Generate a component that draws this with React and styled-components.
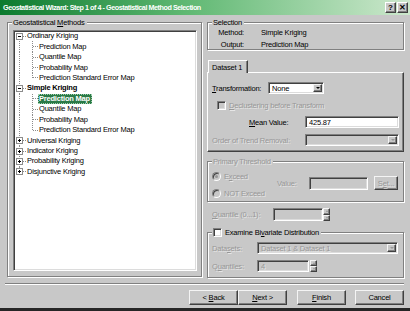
import React from 'react';
import styled, { createGlobalStyle, css } from 'styled-components';

const C = {
  face: '#c8c8c8',
  shadow: '#808080',
  dark: '#404040',
  light: '#ffffff',
  dis: '#979797',
};

const Global = createGlobalStyle`
  html, body { margin: 0; padding: 0; background: ${C.face}; }
  body {
    font-family: 'Liberation Sans', Arial, sans-serif;
    font-size: 7.5px;
    letter-spacing: -0.2px;
    color: #000;
  }
  * { box-sizing: border-box; }
`;

const Window = styled.div`
  width: 410px;
  height: 311px;
  background: ${C.face};
  display: flex;
  flex-direction: column;
  border-bottom: 3px solid #262626;
  overflow: hidden;
`;

const TitleBar = styled.div`
  height: 15px;
  flex: none;
  display: flex;
  align-items: center;
  padding: 0 2px 0 3px;
  background: linear-gradient(90deg, #0c7a2e 0%, #5fb872 45%, #cde8cd 100%);
`;

const TitleText = styled.div`
  flex: 1;
  color: #fff;
  font-weight: bold;
  font-size: 7.2px;
  letter-spacing: -0.45px;
  white-space: nowrap;
`;

const CapBtn = styled.div`
  width: 11px;
  height: 11px;
  margin-left: ${p => p.$gap || 0}px;
  background: ${C.face};
  border: 1px solid;
  border-color: #fff ${C.dark} ${C.dark} #fff;
  box-shadow: inset -1px -1px 0 ${C.shadow};
  display: flex;
  align-items: center;
  justify-content: center;
  font-weight: bold;
  font-size: 8px;
  letter-spacing: 0;
  line-height: 1;
  color: #000;
`;

const Body = styled.div`
  display: flex;
  gap: 5px;
  padding: 7px 6px 0 7px;
  height: 263px;
  flex: none;
`;

const Group = styled.div`
  position: relative;
  flex: none;
  width: ${p => p.$w || 197}px;
  height: ${p => p.$h}px;
  margin-top: ${p => p.$mt || 0}px;
  border: 1px solid ${C.shadow};
  box-shadow: 1px 1px 0 #fff, inset 1px 1px 0 #fff;
`;

const disabledText = css`
  color: ${C.dis};
  text-shadow: 1px 1px 0 rgba(255, 255, 255, 0.55);
`;

const GroupLabel = styled.div`
  position: absolute;
  top: -5px;
  left: 4px;
  padding: 0 2px 0 1px;
  background: ${C.face};
  line-height: 9px;
  display: flex;
  align-items: center;
  gap: 3px;
  white-space: nowrap;
  ${p => p.$disabled && disabledText}
`;

const U = styled.span`
  text-decoration: underline;
  text-underline-offset: 1px;
`;

/* ---------- Tree ---------- */

const LeftGroup = styled(Group)`
  display: flex;
  padding: 7px 4px 5px 5px;
`;

const Tree = styled.div`
  flex: 1;
  background: #fff;
  border: 1px solid;
  border-color: ${C.shadow} #fff #fff ${C.shadow};
  box-shadow: inset 1px 1px 0 ${C.dark}, inset -1px -1px 0 #dcdcdc;
  overflow: hidden;
`;

const dots = 'repeating-linear-gradient(to bottom, #8c8c8c 0 1px, transparent 1px 2px)';
const hdots = 'repeating-linear-gradient(to right, #8c8c8c 0 1px, transparent 1px 2px)';

const TreeRow = styled.div`
  height: 10.45px;
  display: flex;
  align-items: stretch;
  white-space: nowrap;
`;

const RootGutter = styled.span`
  flex: none;
  width: 12px;
  display: flex;
  align-items: center;
  background-repeat: no-repeat;
  background-image: ${p => (p.$line === 'none' ? 'none' : dots)}${p => (p.$tick ? `, ${hdots}` : '')};
  background-position: ${p => (p.$line === 'bottom' ? '5px 50%' : '5px 0')}${p => (p.$tick ? ', 9px 50%' : '')};
  background-size: ${p => (p.$line === 'full' ? '1px 100%' : '1px 50%')}${p => (p.$tick ? ', 3px 1px' : '')};
`;

const ChildGutter = styled.span`
  flex: none;
  width: 12px;
  background-repeat: no-repeat;
  background-image: ${dots}, ${hdots};
  background-position: 6px 0, 7px 50%;
  background-size: 1px ${p => (p.$last ? '55%' : '100%')}, 5px 1px;
`;

const ExpandBox = styled.span`
  width: 7px;
  height: 7px;
  margin-left: 2px;
  border: 1px solid #8c8c8c;
  background: #fff;
  display: flex;
  align-items: center;
  justify-content: center;
`;

const Sign = styled.span`
  width: 3px;
  height: 1px;
  background: #000;
  position: relative;
  display: block;
  &::after {
    content: '';
    display: ${p => (p.$plus ? 'block' : 'none')};
    position: absolute;
    left: 1px;
    top: -1px;
    width: 1px;
    height: 3px;
    background: #000;
  }
`;

const NodeLabel = styled.span`
  align-self: center;
  line-height: 10px;
  padding: 0 2px 0 1px;
  font-weight: ${p => (p.$bold ? 'bold' : 'normal')};
  ${p =>
    p.$selected &&
    css`
      background: #2b7a47;
      color: #fff;
      font-weight: bold;
      outline: 1px dotted #9fd0ae;
      outline-offset: -1px;
    `}
`;

const tree = [
  {
    label: 'Ordinary Kriging',
    children: ['Prediction Map', 'Quantile Map', 'Probability Map', 'Prediction Standard Error Map'],
  },
  {
    label: 'Simple Kriging',
    bold: true,
    selected: 0,
    children: ['Prediction Map', 'Quantile Map', 'Probability Map', 'Prediction Standard Error Map'],
  },
  { label: 'Universal Kriging', collapsed: true },
  { label: 'Indicator Kriging', collapsed: true },
  { label: 'Probability Kriging', collapsed: true },
  { label: 'Disjunctive Kriging', collapsed: true },
];

function MethodTree() {
  const rows = [];
  tree.forEach((node, i) => {
    const first = i === 0;
    const last = i === tree.length - 1;
    rows.push(
      <TreeRow key={node.label}>
        <RootGutter $line={first ? 'bottom' : last ? 'top' : 'full'} $tick>
          <ExpandBox>
            <Sign $plus={node.collapsed} />
          </ExpandBox>
        </RootGutter>
        <NodeLabel $bold={node.bold}>{node.label}</NodeLabel>
      </TreeRow>
    );
    if (node.children) {
      node.children.forEach((c, j) =>
        rows.push(
          <TreeRow key={node.label + c}>
            <RootGutter $line={last ? 'none' : 'full'} />
            <ChildGutter $last={j === node.children.length - 1} />
            <NodeLabel $selected={node.selected === j}>{c}</NodeLabel>
          </TreeRow>
        )
      );
    }
  });
  return <Tree>{rows}</Tree>;
}

/* ---------- Right column ---------- */

const RightCol = styled.div`
  width: 197px;
  display: flex;
  flex-direction: column;
`;

const SelGrid = styled.div`
  display: grid;
  grid-template-columns: 28px auto;
  column-gap: 17px;
  grid-auto-rows: 11.5px;
  align-items: center;
  padding: 4px 0 0 8px;
`;

const SelKey = styled.span`
  text-align: right;
  white-space: nowrap;
`;

const TabStrip = styled.div`
  margin-top: 10px;
  height: 13px;
  display: flex;
  padding-left: 1px;
  margin-bottom: -1px;
  position: relative;
  z-index: 1;
`;

const Tab = styled.div`
  width: 40px;
  height: 13px;
  background: ${C.face};
  border: 1px solid;
  border-bottom: none;
  border-color: #fff ${C.dark} transparent #fff;
  box-shadow: inset -1px 0 0 ${C.shadow};
  padding: 3px 0 0 3px;
  line-height: 8px;
  white-space: nowrap;
`;

const TabPanel = styled.div`
  height: 80px;
  border: 1px solid;
  border-color: #fff ${C.dark} ${C.dark} #fff;
  box-shadow: inset -1px -1px 0 ${C.shadow};
  padding: 9px 4px 0 4px;
  display: flex;
  flex-direction: column;
`;

const Row = styled.div`
  height: ${p => p.$h || 12}px;
  margin-top: ${p => p.$mt || 0}px;
  padding-left: ${p => p.$pl || 0}px;
  display: flex;
  align-items: center;
  white-space: nowrap;
  flex: none;
`;

const Label = styled.span`
  width: ${p => (p.$w ? `${p.$w}px` : 'auto')};
  margin-left: ${p => p.$ml || 0}px;
  flex: none;
  ${p => p.$disabled && disabledText}
`;

const sunken = css`
  border: 1px solid;
  border-color: ${C.shadow} #fff #fff ${C.shadow};
  box-shadow: inset 1px 1px 0 ${C.dark}, inset -1px -1px 0 #dcdcdc;
`;

const raised = css`
  border: 1px solid;
  border-color: #f4f4f4 ${C.dark} ${C.dark} #f4f4f4;
  box-shadow: inset -1px -1px 0 ${C.shadow};
  background: ${C.face};
`;

const Field = styled.div`
  ${sunken};
  width: ${p => p.$w}px;
  height: ${p => p.$h || 12}px;
  margin-left: ${p => (p.$auto ? 'auto' : `${p.$ml || 0}px`)};
  background: ${p => (p.$disabled ? C.face : '#fff')};
  display: flex;
  align-items: center;
  padding: 0 1px 0 3px;
  flex: none;
  ${p => p.$disabled && disabledText}
`;

const FieldText = styled.span`
  flex: 1;
  overflow: hidden;
`;

const DropBtn = styled.span`
  ${raised};
  width: 9px;
  height: 8px;
  flex: none;
  display: flex;
  align-items: center;
  justify-content: center;
  &::after {
    content: '';
    border-left: 2px solid transparent;
    border-right: 2px solid transparent;
    border-top: 2px solid ${p => (p.$disabled ? C.dis : '#000')};
  }
`;

const Spin = styled.div`
  width: 7px;
  height: ${p => p.$h || 13}px;
  margin-left: ${p => p.$ml || 0}px;
  display: flex;
  flex-direction: column;
  flex: none;
`;

const SpinBtn = styled.span`
  ${raised};
  flex: 1;
  display: flex;
  align-items: center;
  justify-content: center;
  &::after {
    content: '';
    border-left: 1.5px solid transparent;
    border-right: 1.5px solid transparent;
    ${p =>
      p.$up
        ? css`border-bottom: 2px solid ${C.dis};`
        : css`border-top: 2px solid ${C.dis};`}
  }
`;

const Check = styled.span`
  ${sunken};
  width: 9px;
  height: 9px;
  flex: none;
  margin-left: ${p => p.$ml || 0}px;
  margin-right: ${p => (p.$mr ?? 3)}px;
  background: ${p => (p.$disabled ? C.face : '#fff')};
`;

const Radio = styled.span`
  width: 9px;
  height: 9px;
  flex: none;
  border-radius: 50%;
  margin-right: 3px;
  background: ${C.face};
  border: 1px solid;
  border-color: ${C.shadow} #fff #fff ${C.shadow};
  box-shadow: inset 1px 1px 0 ${C.dark};
  display: flex;
  align-items: center;
  justify-content: center;
  &::after {
    content: '';
    width: 3px;
    height: 3px;
    border-radius: 50%;
    background: ${p => (p.$checked ? C.dis : 'transparent')};
  }
`;

const ThresholdBody = styled.div`
  display: flex;
  padding-left: 4px;
`;

const RadioCol = styled.div`
  width: 65px;
  display: flex;
  flex-direction: column;
  padding-top: 8px;
  gap: 5px;
`;

const ValueArea = styled.div`
  margin-top: 14px;
  height: 14px;
  display: flex;
  align-items: center;
`;

const SmallBtn = styled.div`
  ${raised};
  width: 24px;
  height: 14px;
  margin-left: 6px;
  display: flex;
  align-items: center;
  justify-content: center;
  ${disabledText};
`;

const Separator = styled.div`
  margin: 5px 6px 0 5px;
  height: 2px;
  border-top: 1px solid ${C.shadow};
  border-bottom: 1px solid #fff;
  flex: none;
`;

const ButtonRow = styled.div`
  margin-top: 5px;
  height: 15px;
  display: flex;
  justify-content: flex-end;
  padding-right: 6px;
  flex: none;
`;

const Button = styled.div`
  ${raised};
  width: ${p => p.$w || 49}px;
  margin-left: ${p => p.$ml || 0}px;
  height: 15px;
  display: flex;
  align-items: center;
  justify-content: center;
  white-space: nowrap;
`;

export default function App() {
  return (
    <>
      <Global />
      <Window>
        <TitleBar>
          <TitleText>Geostatistical Wizard: Step 1 of 4 - Geostatistical Method Selection</TitleText>
          <CapBtn>?</CapBtn>
          <CapBtn $gap={1}>✕</CapBtn>
        </TitleBar>

        <Body>
          <LeftGroup $w={195} $h={255}>
            <GroupLabel>
              <span>
                Geostatistical <U>M</U>ethods
              </span>
            </GroupLabel>
            <MethodTree />
          </LeftGroup>

          <RightCol>
            <Group $h={28}>
              <GroupLabel>Selection</GroupLabel>
              <SelGrid>
                <SelKey>Method:</SelKey>
                <span>Simple Kriging</span>
                <SelKey>Output:</SelKey>
                <span>Prediction Map</span>
              </SelGrid>
            </Group>

            <TabStrip>
              <Tab>Dataset 1</Tab>
            </TabStrip>
            <TabPanel>
              <Row>
                <Label $w={56}>
                  <U>T</U>ransformation:
                </Label>
                <Field $w={56}>
                  <FieldText>None</FieldText>
                  <DropBtn />
                </Field>
              </Row>
              <Row $mt={5}>
                <Check $ml={5} $disabled />
                <Label $disabled>
                  <U>D</U>eclustering before Transform
                </Label>
              </Row>
              <Row $mt={5}>
                <Label $ml={37}>
                  <U>M</U>ean Value:
                </Label>
                <Field $w={94} $auto>
                  <FieldText>425.87</FieldText>
                </Field>
              </Row>
              <Row $mt={6}>
                <Label $disabled>Order of Trend Removal:</Label>
                <Field $w={94} $auto $disabled>
                  <FieldText />
                  <DropBtn $disabled />
                </Field>
              </Row>
            </TabPanel>

            <Group $h={41} $mt={9}>
              <GroupLabel $disabled>Primary Threshold</GroupLabel>
              <ThresholdBody>
                <RadioCol>
                  <Row>
                    <Radio $checked />
                    <Label $disabled>
                      E<U>x</U>ceed
                    </Label>
                  </Row>
                  <Row>
                    <Radio />
                    <Label $disabled>NOT Exceed</Label>
                  </Row>
                </RadioCol>
                <ValueArea>
                  <Label $w={32} $disabled>
                    Value:
                  </Label>
                  <Field $w={59} $h={13} $disabled />
                  <SmallBtn>
                    <span>
                      S<U>e</U>t...
                    </span>
                  </SmallBtn>
                </ValueArea>
              </ThresholdBody>
            </Group>

            <Row $mt={6} $h={13} $pl={5}>
              <Label $w={61} $disabled>
                <U>Q</U>uantile (0...1):
              </Label>
              <Field $w={50} $h={13} $disabled />
              <Spin>
                <SpinBtn $up />
                <SpinBtn />
              </Spin>
            </Row>

            <Group $h={46} $mt={11}>
              <GroupLabel>
                <Check $mr={0} />
                <span>
                  Examine Bi<U>v</U>ariate Distribution
                </span>
              </GroupLabel>
              <Row $mt={9} $pl={4}>
                <Label $w={45} $disabled>
                  Data<U>s</U>ets:
                </Label>
                <Field $w={141} $disabled>
                  <FieldText>Dataset 1 &amp; Dataset 1</FieldText>
                  <DropBtn $disabled />
                </Field>
              </Row>
              <Row $mt={6} $pl={4}>
                <Label $w={45} $disabled>
                  Q<U>u</U>antiles:
                </Label>
                <Field $w={52} $disabled>
                  <FieldText>4</FieldText>
                </Field>
                <Spin $h={12} $ml={1}>
                  <SpinBtn $up />
                  <SpinBtn />
                </Spin>
              </Row>
            </Group>
          </RightCol>
        </Body>

        <Separator />
        <ButtonRow>
          <Button>
            <span>
              &lt; <U>B</U>ack
            </span>
          </Button>
          <Button>
            <span>
              <U>N</U>ext &gt;
            </span>
          </Button>
          <Button $ml={10}>
            <U>F</U>inish
          </Button>
          <Button $ml={9}>Cancel</Button>
        </ButtonRow>
      </Window>
    </>
  );
}
